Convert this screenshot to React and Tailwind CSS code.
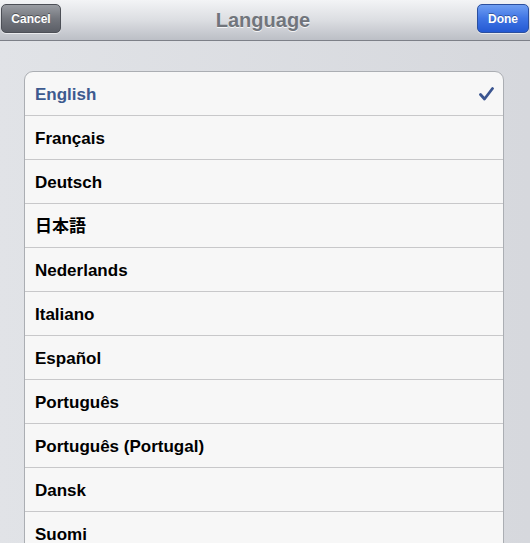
import React from "react";

const langs = [
  "English",
  "Français",
  "Deutsch",
  "日本語",
  "Nederlands",
  "Italiano",
  "Español",
  "Português",
  "Português (Portugal)",
  "Dansk",
  "Suomi",
];

export default function App() {
  return (
    <div
      className="w-[530px] h-[543px] overflow-hidden flex flex-col bg-gradient-to-r from-[#e1e3e7] to-[#d6d8dd]"
      style={{ fontFamily: '"Liberation Sans", Arial, "Noto Sans CJK JP", sans-serif' }}
    >
      <div className="relative h-[41px] shrink-0 bg-gradient-to-b from-[#f3f4f6] via-[#dcdee2] to-[#bcbfc6] border-b border-[#7d8088] flex items-start justify-between px-[1px] pt-[4px]">
        <button className="h-[29px] w-[60px] rounded-[5px] border border-[#4c4f56] bg-gradient-to-b from-[#9a9da3] via-[#73767d] to-[#5b5e66] text-white text-[12px] font-bold [text-shadow:0_-1px_0_rgba(0,0,0,0.4)] shadow-[0_1px_0_rgba(255,255,255,0.6)]">
          Cancel
        </button>
        <div className="absolute left-0 right-0 top-0 h-[40px] flex items-center justify-center pointer-events-none">
          <span className="text-[20px] font-bold text-[#71757c] [text-shadow:0_1px_0_rgba(255,255,255,0.8)] ml-[-4px]">
            Language
          </span>
        </div>
        <button className="h-[29px] w-[52px] rounded-[5px] border border-[#2b4f9e] bg-gradient-to-b from-[#6f9ef2] via-[#3f74e4] to-[#2459d3] text-white text-[12px] font-bold [text-shadow:0_-1px_0_rgba(0,0,0,0.35)] shadow-[0_1px_0_rgba(255,255,255,0.6)]">
          Done
        </button>
      </div>
      <div className="pt-[30px] pl-[24px] pr-[26px]">
        <div className="rounded-t-[9px] border border-[#abaeb3] bg-[#f7f7f7] overflow-hidden">
          {langs.map((l, i) => (
            <div
              key={l}
              className="h-[44px] flex items-center justify-between pl-[10px] pr-[8px] pt-[2px] border-b border-[#c8c8ca]"
            >
              <span className={`text-[17px] font-bold ${i === 0 ? "text-[#3d5a8f]" : "text-black"}`}>{l}</span>
              {i === 0 && (
                <svg width="15" height="14" viewBox="0 0 15 14" className="mr-[1px] mb-[2px]">
                  <path d="M1.5 7.5 L5.5 12 L13.5 1.5" fill="none" stroke="#3b5590" strokeWidth="2.8" strokeLinecap="round" strokeLinejoin="round" />
                </svg>
              )}
            </div>
          ))}
        </div>
      </div>
    </div>
  );
}
